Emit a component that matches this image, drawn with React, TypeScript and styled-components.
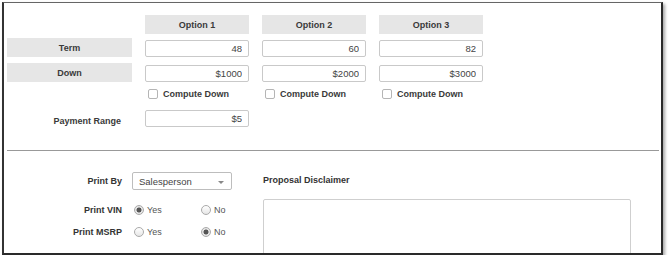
import React from 'react';
import styled, { createGlobalStyle } from 'styled-components';

const OPTIONS = [
  { name: 'Option 1', term: '48', down: '$1000' },
  { name: 'Option 2', term: '60', down: '$2000' },
  { name: 'Option 3', term: '82', down: '$3000' },
];

const App = () => (
  <>
    <GlobalStyle />
    <Frame>
      <Row $top={12}>
        <span />
        {OPTIONS.map((o) => (
          <HeadCell key={o.name}>{o.name}</HeadCell>
        ))}
      </Row>
      <Row $top={4}>
        <HeadCell>Term</HeadCell>
        {OPTIONS.map((o) => (
          <NumInput key={o.name} readOnly value={o.term} />
        ))}
      </Row>
      <Row $top={6}>
        <HeadCell>Down</HeadCell>
        {OPTIONS.map((o) => (
          <NumInput key={o.name} readOnly value={o.down} />
        ))}
      </Row>
      <Row $top={5} $height={14}>
        <span />
        {OPTIONS.map((o) => (
          <CheckLabel key={o.name}>
            <Box />
            Compute Down
          </CheckLabel>
        ))}
      </Row>
      <Row $top={9} $height={17}>
        <SideLabel>Payment Range</SideLabel>
        <NumInput readOnly value="$5" />
      </Row>

      <Divider />

      <Bottom>
        <LeftCol>
          <FormRow $top={21} $height={18}>
            <FormLabel>Print By</FormLabel>
            <Select>
              Salesperson
              <Caret />
            </Select>
          </FormRow>
          <FormRow $top={12}>
            <FormLabel>Print VIN</FormLabel>
            <RadioGroup>
              <RadioItem>
                <Radio $on />
                Yes
              </RadioItem>
              <RadioItem>
                <Radio />
                No
              </RadioItem>
            </RadioGroup>
          </FormRow>
          <FormRow $top={6}>
            <FormLabel>Print MSRP</FormLabel>
            <RadioGroup>
              <RadioItem>
                <Radio />
                Yes
              </RadioItem>
              <RadioItem>
                <Radio $on />
                No
              </RadioItem>
            </RadioGroup>
          </FormRow>
        </LeftCol>
        <RightCol>
          <Heading>Proposal Disclaimer</Heading>
          <Disclaimer />
        </RightCol>
      </Bottom>
    </Frame>
  </>
);

const GlobalStyle = createGlobalStyle`
  body {
    margin: 0;
    background: #fff;
    font-family: "Liberation Sans", Arial, sans-serif;
    color: #333;
  }
`;

const Frame = styled.div`
  box-sizing: border-box;
  margin: 2px 0 0 2px;
  width: 661px;
  height: 253px;
  background: #fff;
  border-left: 2px solid #333;
  border-top: 1px solid #666;
  border-right: 2px solid #2a2a2a;
  border-bottom: 2px solid #2a2a2a;
  box-shadow: 2px 2px 3px rgba(0, 0, 0, 0.35);
  overflow: hidden;
`;

const Row = styled.div<{ $top: number; $height?: number }>`
  display: grid;
  grid-template-columns: 125px repeat(3, 104px);
  column-gap: 13px;
  margin: ${(p) => p.$top}px 0 0 3px;
  height: ${(p) => p.$height ?? 19}px;
`;

const HeadCell = styled.div`
  background: #e6e6e6;
  display: flex;
  align-items: center;
  justify-content: center;
  font-size: 9px;
  font-weight: bold;
  color: #3a3a3a;
`;

const NumInput = styled.input`
  box-sizing: border-box;
  align-self: end;
  height: 17px;
  width: 104px;
  margin: 0;
  padding: 0 6px 0 4px;
  border: 1px solid #c9c9c9;
  border-radius: 2px;
  text-align: right;
  font-family: "Liberation Sans", Arial, sans-serif;
  font-size: 9.5px;
  color: #444;
  background: #fff;
  outline: none;
`;

const CheckLabel = styled.label`
  display: flex;
  align-items: center;
  gap: 5px;
  padding-left: 3px;
  font-size: 9px;
  font-weight: bold;
  color: #3a3a3a;
`;

const Box = styled.span`
  box-sizing: border-box;
  width: 10px;
  height: 10px;
  border: 1px solid #b5b5b5;
  border-radius: 2px;
  background: #fff;
`;

const SideLabel = styled.div`
  display: flex;
  align-items: center;
  justify-content: flex-end;
  padding: 5px 11px 0 0;
  font-size: 9px;
  font-weight: bold;
  color: #3a3a3a;
`;

const Divider = styled.hr`
  margin: 23px 2px 0 3px;
  border: none;
  border-top: 1px solid #999;
  height: 0;
`;

const Bottom = styled.div`
  display: flex;
  padding-left: 3px;
`;

const LeftCol = styled.div`
  width: 256px;
  flex-shrink: 0;
  display: flex;
  flex-direction: column;
`;

const FormRow = styled.div<{ $top: number; $height?: number }>`
  display: grid;
  grid-template-columns: 115px 100px;
  column-gap: 10px;
  align-items: center;
  flex-shrink: 0;
  margin-top: ${(p) => p.$top}px;
  height: ${(p) => p.$height ?? 16}px;
`;

const FormLabel = styled.div`
  text-align: right;
  font-size: 9px;
  font-weight: bold;
  color: #333;
`;

const Select = styled.div`
  box-sizing: border-box;
  height: 18px;
  display: flex;
  align-items: center;
  justify-content: space-between;
  padding: 0 7px 0 6px;
  border: 1px solid #bdbdbd;
  border-radius: 2px;
  font-size: 9.5px;
  color: #444;
`;

const Caret = styled.span`
  width: 0;
  height: 0;
  margin-top: 2px;
  border-left: 3px solid transparent;
  border-right: 3px solid transparent;
  border-top: 3px solid #888;
`;

const RadioGroup = styled.div`
  display: grid;
  grid-template-columns: 67px 40px;
  padding-left: 2px;
`;

const RadioItem = styled.label`
  display: flex;
  align-items: center;
  gap: 3px;
  font-size: 9px;
  color: #555;
`;

const Radio = styled.span<{ $on?: boolean }>`
  box-sizing: border-box;
  width: 10px;
  height: 10px;
  border-radius: 50%;
  border: 1px solid #aaa;
  background: ${(p) =>
    p.$on
      ? 'radial-gradient(circle, #555 0 2.2px, #e4e4e4 2.8px)'
      : 'linear-gradient(#fff, #e6e6e6)'};
`;

const RightCol = styled.div`
  width: 368px;
  flex-shrink: 0;
  display: flex;
  flex-direction: column;
`;

const Heading = styled.div`
  margin-top: 23px;
  height: 12px;
  line-height: 12px;
  font-size: 9px;
  font-weight: bold;
  color: #333;
`;

const Disclaimer = styled.div`
  box-sizing: border-box;
  flex-shrink: 0;
  margin-top: 13px;
  height: 70px;
  border: 1px solid #cfcfcf;
  border-radius: 2px;
  background: #fff;
`;

export default App;
